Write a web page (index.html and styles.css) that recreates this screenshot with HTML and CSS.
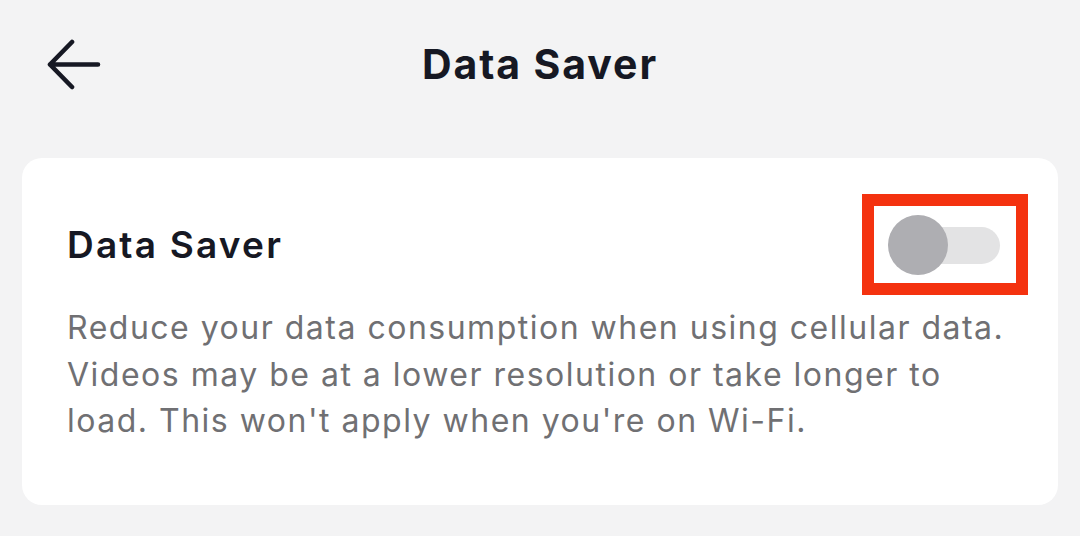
FILE: index.html
```html
<!DOCTYPE html>
<html>
<head>
<meta charset="utf-8">
<link rel="stylesheet" href="styles.css">
</head>
<body>
<div class="page">
  <header class="topbar">
    <button class="back" aria-label="Back">
      <svg width="54" height="52" viewBox="0 0 54 52"><path d="M25 3 L3 25.5 L25 48 M3 25.5 H51" fill="none" stroke="#161823" stroke-width="4.6" stroke-linecap="round" stroke-linejoin="round"/></svg>
    </button>
    <h1 class="title">Data Saver</h1>
  </header>
  <section class="card">
    <div class="row">
      <h2 class="card-title">Data Saver</h2>
      <div class="highlight">
        <div class="switch"><span class="track"></span><span class="knob"></span></div>
      </div>
    </div>
    <p class="desc">Reduce your data consumption when using cellular data. Videos may be at a lower resolution or take longer to load. This won't apply when you're on Wi-Fi.</p>
  </section>
</div>
</body>
</html>
```
FILE: styles.css
```css
* { box-sizing: border-box; }
html, body { margin: 0; padding: 0; }
body {
  background: #f3f3f4;
  font-family: "Inter", "Open Sans", "Liberation Sans", sans-serif;
  width: 1080px;
  height: 536px;
  overflow: hidden;
}
.page { padding: 0 22px; }
.topbar {
  position: relative;
  height: 158px;
  display: flex;
  align-items: flex-start;
  justify-content: center;
}
.back {
  position: absolute;
  left: 25px;
  top: 39px;
  border: 0;
  background: none;
  padding: 0;
}
.back svg { display: block; }
.title {
  margin: 38px 0 0;
  font-size: 41px;
  font-weight: 700;
  color: #161823;
  line-height: 52px;
  letter-spacing: 1.9px;
}
.card {
  background: #fff;
  border-radius: 20px;
  height: 347px;
  padding: 36px 30px 0 45px;
}
.row {
  display: flex;
  justify-content: space-between;
  align-items: center;
}
.card-title {
  margin: 0;
  font-size: 37px;
  font-weight: 600;
  color: #161823;
  letter-spacing: 2.2px;
}
.highlight {
  width: 166px;
  height: 101px;
  border: 12px solid #f4320f;
  display: flex;
  align-items: center;
  padding-left: 14px;
}
.switch {
  position: relative;
  width: 116px;
  height: 60px;
}
.track {
  position: absolute;
  left: 24px;
  top: 12px;
  width: 88px;
  height: 37px;
  border-radius: 19px;
  background: #e3e3e4;
}
.knob {
  position: absolute;
  left: 0;
  top: 0;
  width: 60px;
  height: 60px;
  border-radius: 50%;
  background: #aeaeb2;
}
.desc {
  margin: 10px 0 0;
  font-size: 32px;
  font-weight: 400;
  line-height: 46.5px;
  color: #707073;
  letter-spacing: 1.5px;
  max-width: 952px;
}
```
